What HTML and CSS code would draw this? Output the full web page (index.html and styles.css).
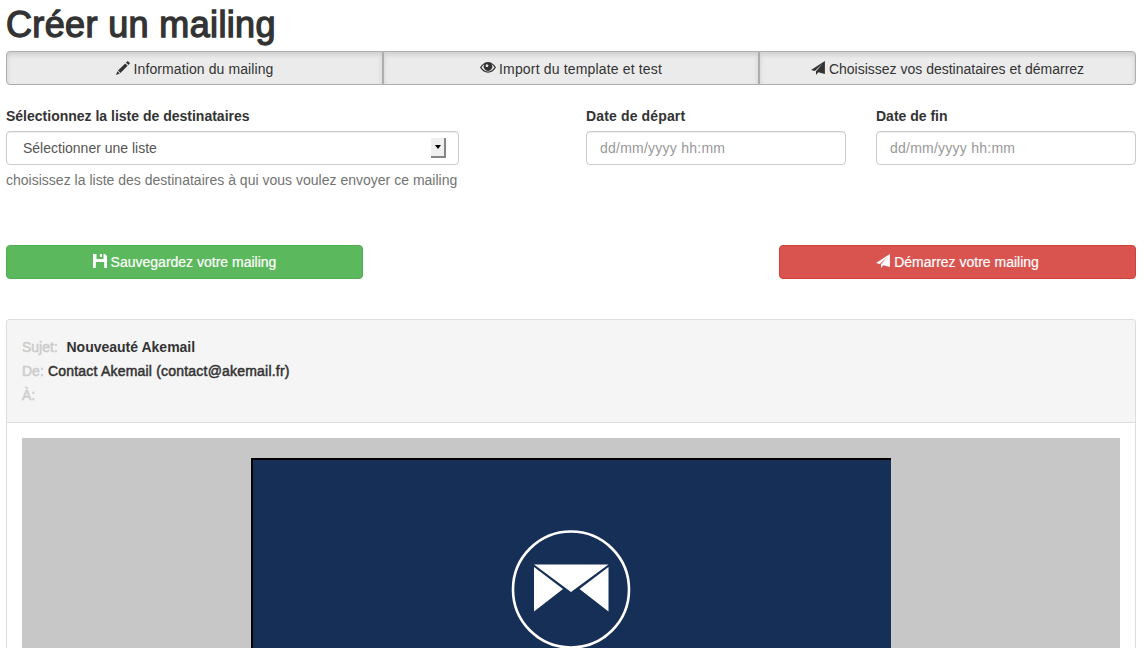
FILE: index.html
```html
<!DOCTYPE html>
<html lang="fr">
<head>
<meta charset="utf-8">
<title>Créer un mailing</title>
<link rel="stylesheet" href="styles.css">
</head>
<body>
<svg class="defs" width="0" height="0" aria-hidden="true">
  <symbol id="plane" viewBox="0 0 14 14"><path d="M13.900 0 0 9l3.800 1L11.500 2.800 5 10.200V14l2.300-2.800L13.900 13z"/></symbol>
</svg>
<main class="page">
  <h1 class="title">Créer un mailing</h1>
  <nav class="steps">
    <button class="step"><svg class="icon" viewBox="0 0 14 14"><path d="M0 14 1.400 10.200 3.800 12.600zM2 9.500 9.200 2.400 11.600 4.800 4.500 12zM10 1.600 11.200.4q.6-.6 1.100 0L13.600 1.700q.6.500 0 1.100L12.400 4z"/></svg><span class="t-info">Information du mailing</span></button>
    <button class="step"><svg class="icon icon-eye" viewBox="0 0 16 14"><path fill-rule="evenodd" d="M0 7.500Q3.400 2 8 2T16 7.500Q12.600 12.700 8 12.700T0 7.500zM1.500 7.500Q4.400 11.500 8 11.500T14.500 7.500Q13.200 5.300 11.500 4.300A4.200 4.200 0 1 1 4.500 4.300Q2.800 5.300 1.500 7.500zM7 4.200A1.700 1.700 0 0 0 5.900 6.800 1.900 1.900 0 0 0 8.500 5.500 2 2 0 0 0 7 4.200z"/></svg><span class="t-import">Import du template et test</span></button>
    <button class="step"><svg class="icon"><use href="#plane"/></svg><span>Choisissez vos destinataires et démarrez</span></button>
  </nav>
  <form class="fields">
    <div class="field list">
      <label>Sélectionnez la liste de destinataires</label>
      <div class="control select"><span>Sélectionner une liste</span><span class="arrow"></span></div>
      <p class="help">choisissez la liste des destinataires à qui vous voulez envoyer ce mailing</p>
    </div>
    <div class="field">
      <label class="t-start">Date de départ</label>
      <div class="control"><span class="placeholder">dd/mm/yyyy hh:mm</span></div>
    </div>
    <div class="field">
      <label>Date de fin</label>
      <div class="control"><span class="placeholder">dd/mm/yyyy hh:mm</span></div>
    </div>
  </form>
  <div class="actions">
    <button class="btn save"><svg class="icon" viewBox="0 0 14 14"><path d="M0 0H3.500V5H10.500V0H12L14 2V14H11.200V8H2.800V14H0zM7 0H9V3H7z"/></svg><span>Sauvegardez votre mailing</span></button>
    <button class="btn start"><svg class="icon"><use href="#plane"/></svg><span>Démarrez votre mailing</span></button>
  </div>
  <section class="panel">
    <header class="mail-head">
      <div class="row"><span class="key t-subj">Sujet:</span><span class="subject">Nouveauté Akemail</span></div>
      <div class="row"><span class="key t-from">De:</span><span class="sender">Contact Akemail (contact@akemail.fr)</span></div>
      <div class="row"><span class="key">À:</span></div>
    </header>
    <div class="mail-body">
      <div class="canvas">
        <div class="banner">
          <svg class="logo" viewBox="0 0 120 118"><circle cx="60" cy="59.500" r="58" fill="none" stroke="#fff" stroke-width="2.600"/><path fill="#fff" d="M23 34.500H97.500L60 62zM23 37 52 59 23 81.500zM97.500 37V81.500L68.500 59z"/></svg>
        </div>
      </div>
    </div>
  </section>
</main>
</body>
</html>
```

FILE: styles.css
```css
* { box-sizing: border-box; }
body {
  margin: 0;
  height: 648px;
  overflow: hidden;
  background: #fff;
  color: #333;
  font: 14px/20px "Liberation Sans", Arial, sans-serif;
}
.defs { display: block; }
.page { display: flex; flex-direction: column; height: 648px; padding: 5px 8px 0 6px; }
.title {
  flex: none;
  margin: 0; height: 46px;
  font-size: 36px; line-height: 40px; font-weight: 500;
  letter-spacing: .36px;
  -webkit-text-stroke: 1.300px #333;
}
button { font: inherit; }
.icon { width: 14px; height: 14px; fill: currentColor; flex: none; }
.icon-eye { width: 16px; }
.steps { flex: none; display: grid; grid-template-columns: 377px 376px 377px; height: 34px; }
.step {
  display: flex; align-items: center; justify-content: center; gap: 4px;
  padding: 2px 0 0;
  border: 1px solid #adadad;
  background: #ebebeb;
  color: #333;
  box-shadow: inset 0 3px 5px rgba(0,0,0,.125);
  white-space: nowrap;
}
.step .icon { margin-top: -2px; }
.step:first-child { border-radius: 4px 0 0 4px; }
.step:last-child { border-radius: 0 4px 4px 0; }
.t-info { letter-spacing: .1px; }
.t-import { letter-spacing: .16px; }
.step .icon-eye { margin: -4px -1px 0 0; }
.fields { flex: none; display: grid; grid-template-columns: 550px 260px 260px; column-gap: 30px; padding-top: 21px; height: 160px; }
.list { width: 453px; }
.field { white-space: nowrap; }
label { display: block; width: max-content; height: 25px; font-weight: 700; }
.t-start { letter-spacing: .14px; }
.control {
  display: flex; align-items: center;
  height: 34px; padding: 0 13px;
  border: 1px solid #ccc; border-radius: 4px;
  box-shadow: inset 0 1px 1px rgba(0,0,0,.075);
  color: #555;
}
.select { justify-content: space-between; padding: 0 12px 0 16px; }
.arrow {
  display: grid; place-items: center;
  width: 15px; height: 20px;
  background: #f0f0f0;
  border-right: 2px solid #858585; border-bottom: 2px solid #858585;
}
.arrow::before { content: ""; border: 3.500px solid transparent; border-top: 4px solid #000; border-bottom: 0; }
.placeholder { color: #999; letter-spacing: .24px; }
.help { margin: 5px 0 0; color: #737373; letter-spacing: .01px; }
.actions { flex: none; display: flex; justify-content: space-between; height: 74px; }
.btn {
  display: flex; align-items: center; justify-content: center; gap: 4px;
  width: 357px; height: 34px; padding: 0;
  border: 1px solid; border-radius: 4px; color: #fff; white-space: nowrap;
  -webkit-text-stroke: .2px #fff;
}
.btn .icon { margin-top: -3px; }
.btn.save { background: #5cb85c; border-color: #4cae4c; }
.btn.start { background: #d9534f; border-color: #d43f3a; }
.panel {
  flex: 1; min-height: 0;
  display: flex; flex-direction: column;
  border: 1px solid #ddd; border-bottom: 0;
  border-radius: 4px 4px 0 0;
}
.mail-head { flex: none; height: 103px; padding: 15px; background: #f5f5f5; border-bottom: 1px solid #ddd; border-radius: 3px 3px 0 0; }
.row { display: flex; height: 24px; line-height: 24px; white-space: pre; }
.key { color: #ccc; -webkit-text-stroke: .5px #ccc; }
.t-subj { width: 44.500px; }
.t-from { width: 26px; }
.subject { font-weight: 700; }
.sender { letter-spacing: .2px; -webkit-text-stroke: .5px #333; }
.mail-body { flex: 1; min-height: 0; display: flex; padding: 15px 15px 0; }
.canvas { flex: 1; display: flex; justify-content: center; padding-top: 20px; background: #c7c7c7; }
.banner {
  display: flex; justify-content: center;
  width: 640px; padding: 70px 2px 0 0;
  border-top: 2px solid #000; border-left: 2px solid #000;
  background: #162f56;
}
.logo { display: block; width: 120px; height: 118px; }
```
